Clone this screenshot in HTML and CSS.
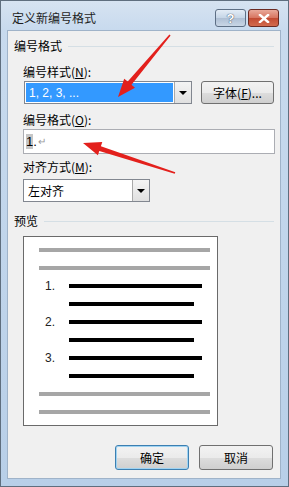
FILE: index.html
```html
<!DOCTYPE html>
<html lang="zh-CN">
  <head>
    <meta charset="UTF-8" />
    <title>定义新编号格式</title>
    <link rel="stylesheet" href="styles.css">
  </head>
  <body>
    <div class="window">
      <div class="titlebar">
        <span class="title">定义新编号格式</span>
        <div class="caption-btns">
          <span class="cap help">?</span>
          <span class="cap close">
            <svg width="12" height="9" viewBox="0 0 12 9"><path d="M2 1 L10 8 M10 1 L2 8" stroke="#fff" stroke-width="2.4" stroke-linecap="square"/></svg>
          </span>
        </div>
      </div>

      <div class="client">
        <div class="group-label"><span>编号格式</span><i></i></div>

        <div class="field-label">编号样式(<u>N</u>):</div>
        <div class="row">
          <div class="combo wide">
            <span class="value selected">1, 2, 3, ...</span>
            <span class="drop"><b></b></span>
          </div>
          <button class="btn font-btn">字体(<u>F</u>)...</button>
        </div>

        <div class="field-label gap-o">编号格式(<u>O</u>):</div>
        <div class="textbox"><span class="hl">1</span>.<span class="para">↵</span></div>

        <div class="field-label gap-m">对齐方式(<u>M</u>):</div>
        <div class="combo narrow">
          <span class="value">左对齐</span>
          <span class="drop"><b></b></span>
        </div>

        <div class="group-label gap-pv"><span>预览</span><i></i></div>
        <div class="preview">
          <div class="pline"><span class="bar gray"></span></div>
          <div class="pline"><span class="bar gray"></span></div>
          <div class="pline item"><span class="num">1.</span><span class="bar black"></span></div>
          <div class="pline item"><span class="num"></span><span class="bar black short"></span></div>
          <div class="pline item"><span class="num">2.</span><span class="bar black"></span></div>
          <div class="pline item"><span class="num"></span><span class="bar black short"></span></div>
          <div class="pline item"><span class="num">3.</span><span class="bar black"></span></div>
          <div class="pline item"><span class="num"></span><span class="bar black short"></span></div>
          <div class="pline"><span class="bar gray"></span></div>
          <div class="pline"><span class="bar gray"></span></div>
        </div>

        <div class="actions">
          <button class="btn default">确定</button>
          <button class="btn">取消</button>
        </div>
      </div>

      <!-- 红色箭头标注 -->
      <svg class="arrows" width="289" height="487" viewBox="0 0 289 487">
        <polygon points="170.6,35.4 131.5,84.8 135.0,87.7 118,97 124.2,78.7 127.7,81.6 169.4,34.6" fill="#e3201c"/>
        <polygon points="175.3,172.3 100.9,146.2 102.3,141.9 83,143 97.9,155.3 99.3,151.0 174.7,173.7" fill="#e3201c"/>
      </svg>
    </div>
  </body>
</html>
```

FILE: styles.css
```css
body {
  margin: 0;
  background: #fff;
  font-family: "Noto Sans CJK SC", "Liberation Sans", sans-serif;
  font-size: 12px;
  color: #000;
}
.window {
  position: relative;
  width: 287px;
  height: 485px;
  border: 1px solid #5f6e7e;
  background: linear-gradient(#c9dbee, #b8cfe8);
  display: flex;
  flex-direction: column;
  overflow: hidden;
}
.titlebar {
  height: 29px;
  display: flex;
  align-items: flex-start;
  justify-content: space-between;
  padding: 0 9px 0 11px;
  background: linear-gradient(#d6e3f1, #c8daee);
}
.title {
  margin-top: 8px;
  line-height: 17px;
  font-size: 12px;
  color: #1e1e1e;
}
.caption-btns {
  display: flex;
  gap: 2px;
  margin-top: 8px;
}
.cap {
  height: 16px;
  border: 1px solid #5d6f85;
  border-radius: 3px;
  display: flex;
  align-items: center;
  justify-content: center;
  box-sizing: content-box;
}
.help {
  width: 29px;
  background: linear-gradient(#e3ecf6 0%, #c5d5e6 50%, #aebfd4 51%, #c8d6e6 100%);
  color: #fff;
  font-family: "Liberation Sans", sans-serif;
  font-weight: bold;
  font-size: 13px;
  text-shadow: 0 0 1px #3c4d63, 0 0 1px #3c4d63;
}
.close {
  width: 29px;
  border-color: #6b2a22;
  background: linear-gradient(#e9a99a 0%, #d7735e 50%, #c24a32 51%, #d26a4d 100%);
}
.client {
  flex: 1;
  margin: 0 7px 7px 6px;
  background: #f0f0f0;
  border: 1px solid #9fb3c9;
  padding: 7px 6px 0 6px;
  display: flex;
  flex-direction: column;
  align-items: flex-start;
}
.group-label {
  display: flex;
  align-items: center;
  width: 100%;
  line-height: 16px;
}
.group-label i {
  flex: 1;
  height: 1px;
  background: #d5dfe5;
  margin-left: 6px;
}
.field-label {
  margin: 10px 0 1px 9px;
  line-height: 16px;
}
.gap-o {
  margin-top: 8px;
}
.gap-m {
  margin-top: 5px;
  margin-bottom: 4px;
}
.gap-pv {
  margin-top: 11px;
}
.row {
  display: flex;
  gap: 9px;
  margin-left: 10px;
}
.combo {
  height: 21px;
  border: 1px solid #828790;
  background: #fff;
  display: flex;
  align-items: stretch;
}
.combo.wide {
  width: 166px;
}
.combo.narrow {
  width: 125px;
  margin-left: 9px;
}
.combo .value {
  flex: 1;
  display: flex;
  align-items: center;
  padding-left: 3px;
  margin: 1px;
}
.combo .value.selected {
  background: #3399ff;
  color: #fff;
  font-family: "Liberation Sans", sans-serif;
  font-size: 12px;
}
.drop {
  width: 16px;
  border-left: 1px solid #a9a9a9;
  background: linear-gradient(#f4f4f4, #e0e0e0);
  display: flex;
  align-items: center;
  justify-content: center;
}
.drop b {
  width: 0;
  height: 0;
  border-left: 4px solid transparent;
  border-right: 4px solid transparent;
  border-top: 4px solid #000;
}
.btn {
  font: inherit;
  width: 74px;
  height: 25px;
  border: 1px solid #707070;
  border-radius: 3px;
  background: linear-gradient(#f2f2f2 0%, #ebebeb 50%, #dddddd 51%, #cfcfcf 100%);
  color: #000;
  padding: 0;
}
.font-btn {
  width: 73px;
  height: 23px;
}
.textbox {
  width: 248px;
  height: 23px;
  margin-left: 9px;
  border: 1px solid #abadb3;
  background: #fff;
  display: flex;
  align-items: center;
  padding-left: 2px;
  font-family: "Liberation Sans", sans-serif;
  font-size: 13px;
}
.textbox .hl {
  background: #c6c6c6;
}
.textbox .para {
  color: #9a9a9a;
  font-size: 10px;
  margin-left: 1px;
}
.preview {
  margin: 7px 0 0 9px;
  width: 193px;
  height: 184px;
  border: 1px solid #6a6a6a;
  background: #fff;
  padding-top: 4px;
}
.pline {
  height: 18px;
  display: flex;
  align-items: center;
  padding-left: 15px;
}
.pline.item {
  padding-left: 21px;
}
.num {
  width: 24px;
  font-family: "Liberation Sans", sans-serif;
  font-size: 12px;
  color: #222;
}
.bar {
  height: 4px;
}
.bar.gray {
  width: 171px;
  background: #a6a6a6;
}
.bar.black {
  width: 133px;
  background: #000;
}
.bar.black.short {
  width: 125px;
}
.actions {
  display: flex;
  gap: 10px;
  align-self: flex-end;
  margin: 19px 1px 0 0;
}
.btn.default {
  border-color: #3c7fb1;
  box-shadow: inset 0 0 0 1px #9fd3f2;
}
.arrows {
  position: absolute;
  left: -1px;
  top: -1px;
  pointer-events: none;
}
```
